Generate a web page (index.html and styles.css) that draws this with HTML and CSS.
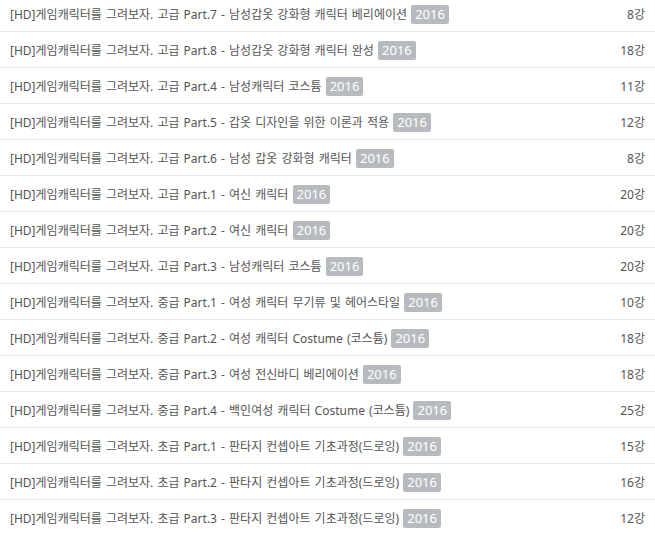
FILE: index.html
```html
<!DOCTYPE html>
<html lang="ko">
   <head>
      <meta charset="UTF-8">
      <title>강의 목록</title>
      <link rel="stylesheet" href="styles.css">
   </head>
   <body>
      <ul class="lecture-list">
         <li class="lecture"><span class="title">[HD]게임캐릭터를 그려보자. 고급 Part.7 - 남성갑옷 강화형 캐릭터 베리에이션 <span class="year">2016</span></span><span class="count">8강</span></li>
         <li class="lecture"><span class="title">[HD]게임캐릭터를 그려보자. 고급 Part.8 - 남성갑옷 강화형 캐릭터 완성 <span class="year">2016</span></span><span class="count">18강</span></li>
         <li class="lecture"><span class="title">[HD]게임캐릭터를 그려보자. 고급 Part.4 - 남성캐릭터 코스튬 <span class="year">2016</span></span><span class="count">11강</span></li>
         <li class="lecture"><span class="title">[HD]게임캐릭터를 그려보자. 고급 Part.5 - 갑옷 디자인을 위한 이론과 적용 <span class="year">2016</span></span><span class="count">12강</span></li>
         <li class="lecture"><span class="title">[HD]게임캐릭터를 그려보자. 고급 Part.6 - 남성 갑옷 강화형 캐릭터 <span class="year">2016</span></span><span class="count">8강</span></li>
         <li class="lecture"><span class="title">[HD]게임캐릭터를 그려보자. 고급 Part.1 - 여신 캐릭터 <span class="year">2016</span></span><span class="count">20강</span></li>
         <li class="lecture"><span class="title">[HD]게임캐릭터를 그려보자. 고급 Part.2 - 여신 캐릭터 <span class="year">2016</span></span><span class="count">20강</span></li>
         <li class="lecture"><span class="title">[HD]게임캐릭터를 그려보자. 고급 Part.3 - 남성캐릭터 코스튬 <span class="year">2016</span></span><span class="count">20강</span></li>
         <li class="lecture"><span class="title">[HD]게임캐릭터를 그려보자. 중급 Part.1 - 여성 캐릭터 무기류 및 헤어스타일 <span class="year">2016</span></span><span class="count">10강</span></li>
         <li class="lecture"><span class="title">[HD]게임캐릭터를 그려보자. 중급 Part.2 - 여성 캐릭터 Costume (코스튬) <span class="year">2016</span></span><span class="count">18강</span></li>
         <li class="lecture"><span class="title">[HD]게임캐릭터를 그려보자. 중급 Part.3 - 여성 전신바디 베리에이션 <span class="year">2016</span></span><span class="count">18강</span></li>
         <li class="lecture"><span class="title">[HD]게임캐릭터를 그려보자. 중급 Part.4 - 백인여성 캐릭터 Costume (코스튬) <span class="year">2016</span></span><span class="count">25강</span></li>
         <li class="lecture"><span class="title">[HD]게임캐릭터를 그려보자. 초급 Part.1 - 판타지 컨셉아트 기초과정(드로잉) <span class="year">2016</span></span><span class="count">15강</span></li>
         <li class="lecture"><span class="title">[HD]게임캐릭터를 그려보자. 초급 Part.2 - 판타지 컨셉아트 기초과정(드로잉) <span class="year">2016</span></span><span class="count">16강</span></li>
         <li class="lecture"><span class="title">[HD]게임캐릭터를 그려보자. 초급 Part.3 - 판타지 컨셉아트 기초과정(드로잉) <span class="year">2016</span></span><span class="count">12강</span></li>
      </ul>
   </body>
</html>
```

FILE: styles.css
```css
body {
margin: 0;
padding: 0;
background-color: #fff;
color: #555;
font-family: "Noto Sans", "Noto Sans CJK KR", sans-serif;
font-size: 12px;
}
.lecture-list {
list-style: none;
margin: -4px 0 0 0;
padding: 0;
}
.lecture {
display: flex;
align-items: center;
justify-content: space-between;
height: 35px;
padding: 0 10px 0 10px;
border-bottom: 1px solid #e6e6e6;
}
.title {
word-spacing: 1px;
}
.year {
display: inline-block;
background-color: #b7bbbf;
color: #fff;
padding: 0 4px;
margin-top: 2px;
line-height: 19px;
border-radius: 2px;
font-size: 13px;
word-spacing: 0;
}
```
